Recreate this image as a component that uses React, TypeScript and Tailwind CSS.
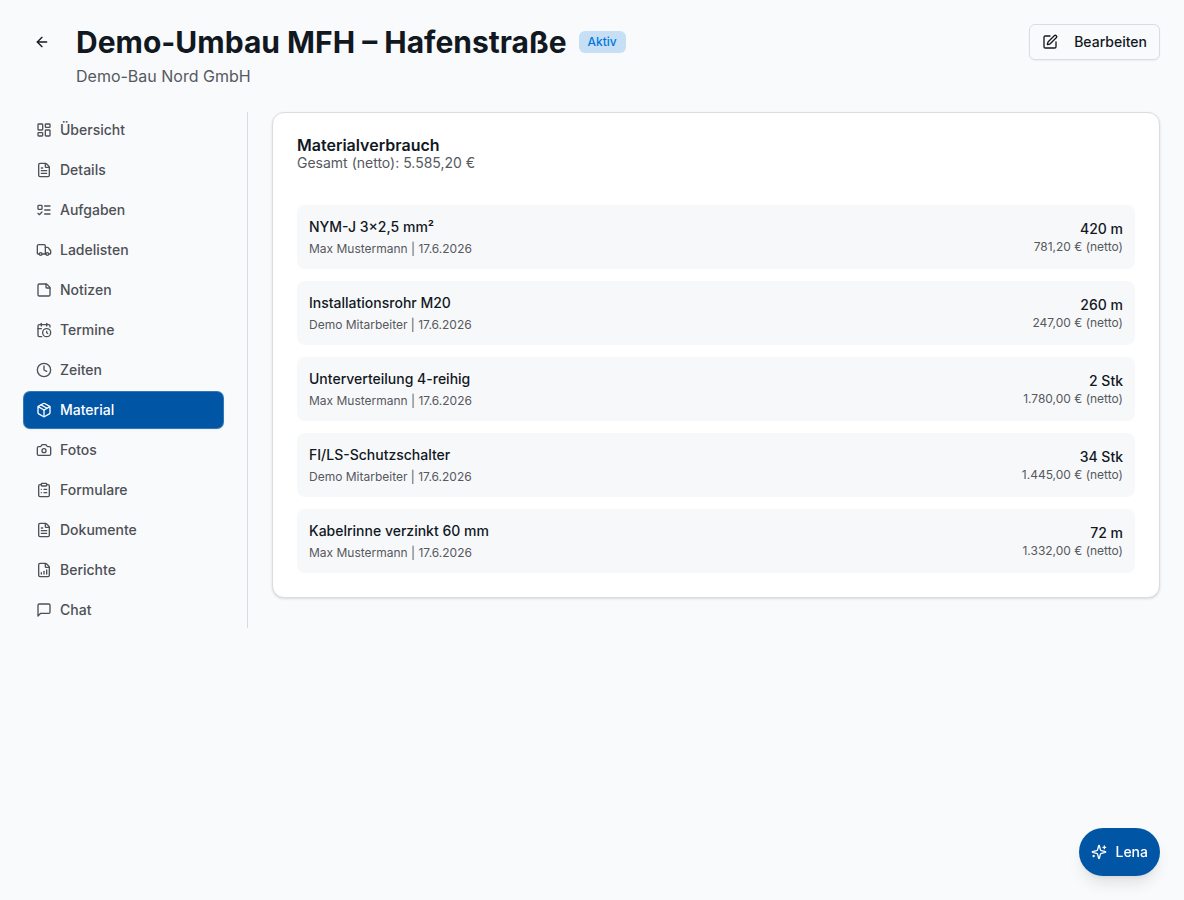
import {
  ArrowLeft,
  CalendarClock,
  Camera,
  ClipboardList,
  Clock,
  FileChartColumnIncreasing,
  FileText,
  LayoutDashboard,
  Package,
  SquarePen,
  StickyNote,
  Truck,
} from "lucide-react";
import { useState, type ComponentType, type ReactNode } from "react";

type Tab = { id: string; label: string; icon: ComponentType<{ className?: string }> };

const tabs: Tab[] = [
  { id: "overview", label: "Übersicht", icon: LayoutDashboard },
  { id: "details", label: "Details", icon: FileText },
  { id: "tasks", label: "Aufgaben", icon: TodoIcon },
  { id: "loading-lists", label: "Ladelisten", icon: Truck },
  { id: "notes", label: "Notizen", icon: StickyNote },
  { id: "appointments", label: "Termine", icon: CalendarClock },
  { id: "times", label: "Zeiten", icon: Clock },
  { id: "material", label: "Material", icon: Package },
  { id: "photos", label: "Fotos", icon: Camera },
  { id: "forms", label: "Formulare", icon: ClipboardList },
  { id: "documents", label: "Dokumente", icon: FileText },
  { id: "reports", label: "Berichte", icon: FileChartColumnIncreasing },
  { id: "chat", label: "Chat", icon: ChatIcon },
];

const materials = [
  { name: "NYM-J 3×2,5 mm²", user: "Max Mustermann", date: "17.6.2026", amount: "420 m", price: "781,20 €" },
  { name: "Installationsrohr M20", user: "Demo Mitarbeiter", date: "17.6.2026", amount: "260 m", price: "247,00 €" },
  { name: "Unterverteilung 4-reihig", user: "Max Mustermann", date: "17.6.2026", amount: "2 Stk", price: "1.780,00 €" },
  { name: "FI/LS-Schutzschalter", user: "Demo Mitarbeiter", date: "17.6.2026", amount: "34 Stk", price: "1.445,00 €" },
  { name: "Kabelrinne verzinkt 60 mm", user: "Max Mustermann", date: "17.6.2026", amount: "72 m", price: "1.332,00 €" },
];

export default function App() {
  const [activeTab, setActiveTab] = useState("material");

  return (
    <div className="min-h-screen bg-[#f9fafc] p-6 font-['Inter',sans-serif] text-[#12181f] antialiased">
      <ProjectHeader />

      <div className="mt-6 flex items-start gap-6">
        <nav className="flex w-56 shrink-0 flex-col gap-1 border-r border-[#d9dbdf] pr-6">
          {tabs.map((tab) => (
            <TabButton
              key={tab.id}
              tab={tab}
              active={tab.id === activeTab}
              onClick={() => setActiveTab(tab.id)}
            />
          ))}
        </nav>

        <main className="min-w-0 flex-1">
          <MaterialCard />
        </main>
      </div>

      {/* Assistant */}
      <button className="fixed right-6 bottom-6 flex h-12 cursor-pointer items-center gap-2 rounded-full bg-[#0055a5] px-3 text-sm font-medium text-white shadow-lg">
        <SparklesIcon className="size-4" />
        Lena
      </button>
    </div>
  );
}

function ProjectHeader() {
  return (
    <header className="flex items-start gap-4">
      <button aria-label="Zurück" className="flex size-9 shrink-0 cursor-pointer items-center justify-center rounded-md">
        <ArrowLeft className="size-4" />
      </button>
      <div className="min-w-0 flex-1">
        <div className="flex items-center gap-3">
          <h1 className="text-3xl font-bold">Demo-Umbau MFH – Hafenstraße</h1>
          <span className="rounded-md border border-transparent bg-[#c7dff5] px-2 py-0.5 text-xs font-medium text-[#0077db]">
            Aktiv
          </span>
        </div>
        <p className="mt-1 text-base text-[#56595e]">Demo-Bau Nord GmbH</p>
      </div>
      <button className="flex h-9 shrink-0 cursor-pointer items-center gap-4 rounded-md border border-[#d9dce2] px-3 text-sm font-medium shadow-xs">
        <SquarePen className="size-4" />
        Bearbeiten
      </button>
    </header>
  );
}

function TabButton({ tab, active, onClick }: { tab: Tab; active: boolean; onClick: () => void }) {
  const Icon = tab.icon;

  return (
    <button
      onClick={onClick}
      aria-current={active ? "page" : undefined}
      className={`flex h-9 cursor-pointer items-center gap-2 rounded-md px-3 text-sm font-medium ${
        active ? "bg-[#0055a5] text-white shadow-sm ring-1 ring-[#3377b8]" : "text-[#4d5055]"
      }`}
    >
      <Icon className="size-4 shrink-0" />
      {tab.label}
    </button>
  );
}

function MaterialCard() {
  return (
    <section className="rounded-xl border border-[#d9dce2] bg-white p-6 shadow-sm">
      <h2 className="text-base leading-4 font-semibold">Materialverbrauch</h2>
      <p className="text-sm text-[#56595e]">Gesamt (netto): 5.585,20 €</p>

      <ul className="mt-8 flex flex-col gap-3">
        {materials.map((item) => (
          <li key={item.name} className="flex items-center justify-between rounded-lg bg-[#f7f8fa] p-3">
            <div>
              <p className="text-sm font-medium">{item.name}</p>
              <p className="mt-1 text-xs text-[#56595e]">
                {item.user} | {item.date}
              </p>
            </div>
            <div className="text-right">
              <p className="text-sm font-medium">{item.amount}</p>
              <p className="text-xs text-[#56595e]">{item.price} (netto)</p>
            </div>
          </li>
        ))}
      </ul>
    </section>
  );
}

function Icon({ className, children }: { className?: string; children: ReactNode }) {
  return (
    <svg viewBox="0 0 24 24" fill="none" stroke="currentColor" strokeWidth="2" strokeLinecap="round" strokeLinejoin="round" aria-hidden="true" className={className}>
      {children}
    </svg>
  );
}

function TodoIcon({ className }: { className?: string }) {
  return (
    <Icon className={className}>
      <rect x="3" y="5" width="6" height="6" rx="1" />
      <path d="m3 17 2 2 4-4" />
      <path d="M13 6h8M13 12h8M13 18h8" />
    </Icon>
  );
}

function ChatIcon({ className }: { className?: string }) {
  return (
    <Icon className={className}>
      <path d="M21 15a2 2 0 0 1-2 2H7l-4 4V5a2 2 0 0 1 2-2h14a2 2 0 0 1 2 2z" />
    </Icon>
  );
}

function SparklesIcon({ className }: { className?: string }) {
  return (
    <Icon className={className}>
      <path d="M9.937 15.5A2 2 0 0 0 8.5 14.063l-6.135-1.582a.5.5 0 0 1 0-.962L8.5 9.936A2 2 0 0 0 9.937 8.5l1.582-6.135a.5.5 0 0 1 .963 0L14.063 8.5A2 2 0 0 0 15.5 9.937l6.135 1.581a.5.5 0 0 1 0 .964L15.5 14.063a2 2 0 0 0-1.437 1.437l-1.582 6.135a.5.5 0 0 1-.963 0z" />
      <path d="M20 3v4M22 5h-4" />
      <path d="M4 17v2M5 18H3" />
    </Icon>
  );
}
